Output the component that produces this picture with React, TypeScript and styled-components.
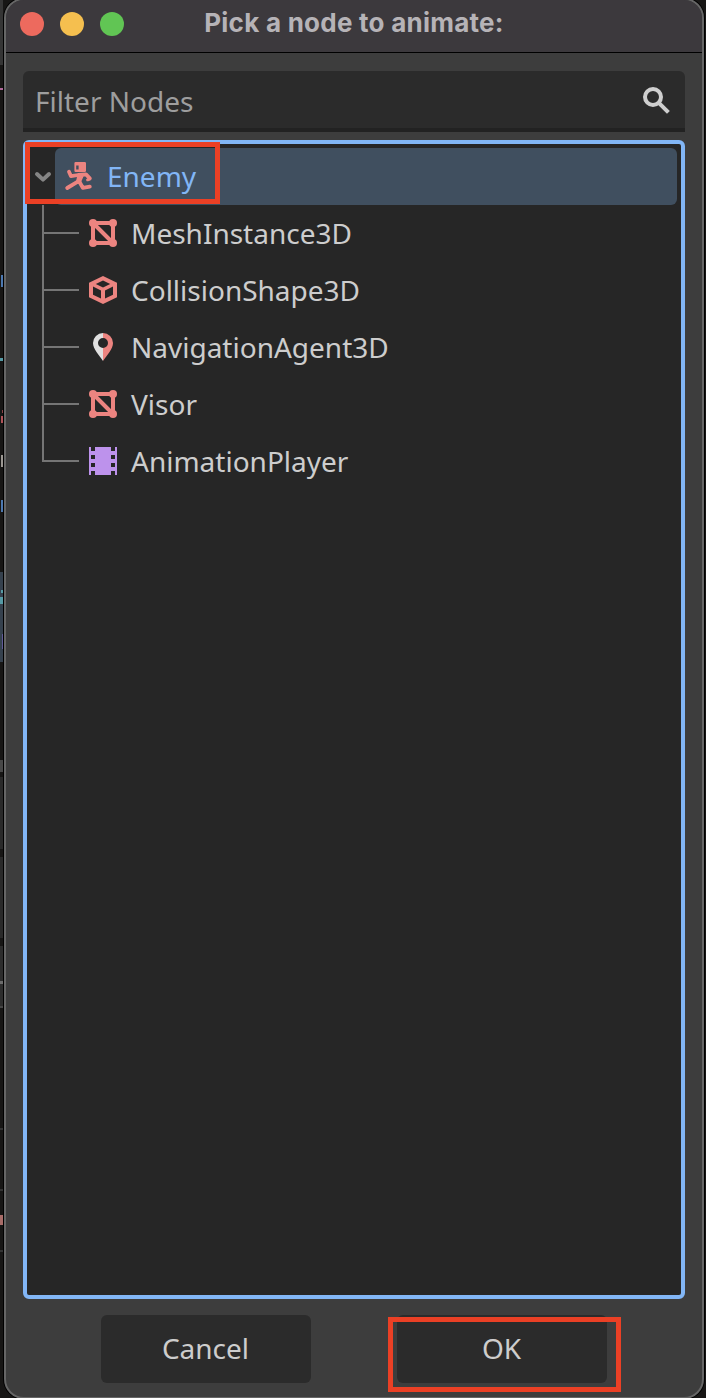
import React from "react";
import styled, { createGlobalStyle } from "styled-components";

const Global = createGlobalStyle`
  *{box-sizing:border-box}
  html,body{margin:0;padding:0;background:#171615}
  #root{height:1398px}
`;

const Desktop = styled.div`
  position: relative;
  display: flex;
  width: 706px;
  height: 1398px;
  overflow: hidden;
  background: #171615;
  padding: 0 2px 0 3px;
  font-family: "Noto Sans", sans-serif;
  font-size: 28px;
  color: #cdcdcd;
`;

const Sliver = styled.i<{ $y: number; $h: number; $c: string; $x?: number }>`
  position: absolute;
  left: ${(p) => p.$x ?? 0}px;
  top: ${(p) => p.$y}px;
  width: ${(p) => 3 - (p.$x ?? 0)}px;
  height: ${(p) => p.$h}px;
  background: ${(p) => p.$c};
`;

const Window = styled.div`
  position: relative;
  flex: 1;
  display: flex;
  flex-direction: column;
  height: 1401px;
  margin-top: -2px;
  border: 2px solid #666;
  border-radius: 20px;
  background: #3d3d3d;
  box-shadow: 0 0 0 1px #000;
  margin-left: 1px;
  overflow: hidden;
`;

const TitleBar = styled.header`
  position: relative;
  display: flex;
  align-items: center;
  justify-content: center;
  height: 53px;
  flex: none;
  background: #3c393d;
  border-bottom: 1px solid #000;
`;

const Lights = styled.div`
  position: absolute;
  left: 14px;
  top: 12px;
  display: flex;
  gap: 16px;
`;

const Light = styled.span<{ $c: string }>`
  width: 24px;
  height: 24px;
  border-radius: 50%;
  background: ${(p) => p.$c};
`;

const Title = styled.h1`
  margin: -6px 0 0;
  font: 700 26px/30px Inter, sans-serif;
  letter-spacing: 0.25px;
  color: #b6b3b7;
  white-space: nowrap;
`;

const Body = styled.main`
  flex: 1;
  display: flex;
  flex-direction: column;
  padding: 18px 17px 13px;
`;

const Filter = styled.div`
  display: flex;
  align-items: center;
  justify-content: space-between;
  height: 61px;
  padding: 2px 13px 0 12px;
  background: #2b2b2b;
  border-bottom: 4px solid #222;
  border-radius: 6px 6px 0 0;
  color: #9e9e9e;
  flex: none;
`;

const Tree = styled.div`
  height: 1159px;
  margin-top: 8px;
  padding: 4px;
  border: 4px solid #82b6f6;
  border-radius: 6px;
  background: #262626;
`;

const Row = styled.div`
  display: flex;
  height: 57px;
`;

const Fold = styled.div`
  width: 24px;
  display: flex;
  align-items: center;
  padding-left: 3px;
`;

const Selected = styled.div`
  flex: 1;
  display: flex;
  align-items: center;
  gap: 12px;
  padding-left: 8px;
  background: #404f5f;
  border-radius: 6px;
  color: #82b6f6;
`;

const Branch = styled.div<{ $last?: boolean }>`
  position: relative;
  width: 36px;
  margin-left: 11px;
  &::before {
    content: "";
    position: absolute;
    left: 0;
    top: 0;
    width: 2px;
    height: ${(p) => (p.$last ? 29 : 57)}px;
    background: #757575;
  }
  &::after {
    content: "";
    position: absolute;
    left: 0;
    top: 27px;
    width: 37px;
    height: 2px;
    background: #757575;
  }
`;

const Leaf = styled.div`
  display: flex;
  align-items: center;
  gap: 12px;
  padding-left: 9px;
`;

const Label = styled.span`
  line-height: 38px;
  white-space: nowrap;
`;

const NodeLabel = styled(Label)`
  margin-top: -2px;
`;

const Icon = styled.svg`
  width: 32px;
  height: 32px;
  display: block;
  flex: none;
  margin-top: -1px;
`;

const Buttons = styled.footer`
  display: flex;
  gap: 86px;
  padding-left: 78px;
  margin-top: 16px;
`;

const Button = styled.button`
  width: 210px;
  height: 68px;
  border: 0;
  border-radius: 6px;
  background: #2b2b2b;
  color: #cdcdcd;
  font: inherit;
  padding: 0 1px 2px 0;
`;

const Mark = styled.div<{ $x: number; $y: number; $w: number; $h: number }>`
  position: absolute;
  left: ${(p) => p.$x}px;
  top: ${(p) => p.$y}px;
  width: ${(p) => p.$w}px;
  height: ${(p) => p.$h}px;
  border: 5px solid #eb4025;
`;

const RED = "#ec8480";

const MeshIcon = () => (
  <Icon viewBox="0 0 16 16" fill={RED}>
    <path d="M3 3H13V13H3Z M3 3L13 13" fill="none" stroke={RED} strokeWidth="2" />
    <circle cx="3" cy="3" r="2" />
    <circle cx="13" cy="3" r="2" />
    <circle cx="3" cy="13" r="2" />
    <circle cx="13" cy="13" r="2" />
  </Icon>
);

const ShapeIcon = () => (
  <Icon viewBox="0 0 16 16">
    <path
      fill={RED}
      fillRule="evenodd"
      d="M8 1 15 4.4V11.6L8 15 1 11.6V4.4Z M8 3.3 4.4 5 8 6.7 11.6 5Z M3 6.2V10.4L7 12.3V8.2Z M13 6.2V10.4L9 12.3V8.2Z"
    />
  </Icon>
);

const AgentIcon = () => (
  <Icon viewBox="0 0 16 16">
    <path fill="#e0e0e0" d="M8 1A5 5 0 0 0 3 6C3 9 6 12 8 15V8.5A2.5 2.5 0 0 1 8 3.5Z" />
    <path fill={RED} d="M8 1A5 5 0 0 1 13 6C13 9 10 12 8 15V8.5A2.5 2.5 0 0 0 8 3.5Z" />
  </Icon>
);

const AnimationIcon = () => (
  <Icon viewBox="0 0 16 16">
    <path
      fill="#bd92ec"
      fillRule="evenodd"
      d="M1 1H2V3H4V1H12V3H14V1H15V15H14V13H12V15H4V13H2V15H1Z M2 5V7H4V5Z M2 9V11H4V9Z M12 5V7H14V5Z M12 9V11H14V9Z"
    />
  </Icon>
);

const BodyIcon = () => (
  <Icon viewBox="0 0 16 16" fill="none" stroke={RED} strokeWidth="1.9" strokeLinecap="round" strokeLinejoin="round">
    <path fill={RED} stroke="none" fillRule="evenodd" d="M6.3 1H10.9Q11.5 1 11.5 1.6V5.4Q11.5 6 10.9 6H6.3Q5.7 6 5.7 5.4V1.6Q5.7 1 6.3 1Z M6.6 2.8V4.8H7.8V2.8Z" />
    <path d="M3 5.9 4 8.1 7.6 7.5 11.5 7.2 13.4 9.2" />
    <path strokeWidth="1.5" d="M13.4 9.4 12.3 9.9" />
    <path d="M7.6 10.7 2.1 14 M8.2 10.9 9.9 13.9 13.4 13.3" />
    <path fill={RED} strokeWidth="1" d="M7.8 7 10.2 7 8.6 10.8 7 10.8Z" />
  </Icon>
);

const leaves: [string, React.FC][] = [
  ["MeshInstance3D", MeshIcon],
  ["CollisionShape3D", ShapeIcon],
  ["NavigationAgent3D", AgentIcon],
  ["Visor", MeshIcon],
  ["AnimationPlayer", AnimationIcon],
];

const slivers: [number, number, string, number?][] = [
  [0, 65, "#353535"],
  [88, 2, "#b0679a"],
  [275, 12, "#4c78b0", 1],
  [358, 3, "#559aa5"],
  [410, 3, "#8c4448", 2],
  [416, 7, "#b05358", 1],
  [455, 12, "#9b9792", 1],
  [500, 12, "#4c78b0", 1],
  [572, 90, "#35414e"],
  [590, 3, "#559aa5", 1],
  [597, 7, "#559aa5"],
  [634, 15, "#5f5a98", 2],
  [760, 12, "#484848"],
  [777, 72, "#2a2a2a"],
  [857, 81, "#2a2a2a"],
  [946, 61, "#2d2d2d"],
  [981, 3, "#6b6b6b"],
  [1006, 2, "#464646"],
  [1128, 2, "#333"],
  [1189, 2, "#333"],
  [1215, 10, "#a86c68"],
  [1250, 2, "#333"],
];

export default function App() {
  return (
    <Desktop>
      <Global />
      {slivers.map(([y, h, c, x]) => (
        <Sliver key={y} $y={y} $h={h} $c={c} $x={x} />
      ))}
      <Window>
        <TitleBar>
          <Lights>
            <Light $c="#ed6a5e" />
            <Light $c="#f5bf4f" />
            <Light $c="#61c554" />
          </Lights>
          <Title>Pick a node to animate:</Title>
        </TitleBar>
        <Body>
          <Filter>
            <Label>Filter Nodes</Label>
            <Icon viewBox="0 0 16 16" fill="none" stroke="#cfcfcf" strokeWidth="2">
              <circle cx="6.5" cy="6.5" r="4" />
              <path d="M9.4 9.4 14.2 14.2" />
            </Icon>
          </Filter>
          <Tree>
            <Row>
              <Fold>
                <svg width="18" height="12" viewBox="0 0 18 12" fill="none" stroke="#858585" strokeWidth="4" strokeLinecap="round" strokeLinejoin="round">
                  <path d="M3 3 9 8.6 15 3" />
                </svg>
              </Fold>
              <Selected>
                <BodyIcon />
                <NodeLabel>Enemy</NodeLabel>
              </Selected>
            </Row>
            {leaves.map(([name, Glyph], i) => (
              <Row key={name}>
                <Branch $last={i === leaves.length - 1} />
                <Leaf>
                  <Glyph />
                  <NodeLabel>{name}</NodeLabel>
                </Leaf>
              </Row>
            ))}
          </Tree>
          <Buttons>
            <Button>Cancel</Button>
            <Button>OK</Button>
          </Buttons>
        </Body>
      </Window>
      <Mark $x={25} $y={142} $w={195} $h={62} />
      <Mark $x={388} $y={1317} $w={233} $h={75} />
    </Desktop>
  );
}
